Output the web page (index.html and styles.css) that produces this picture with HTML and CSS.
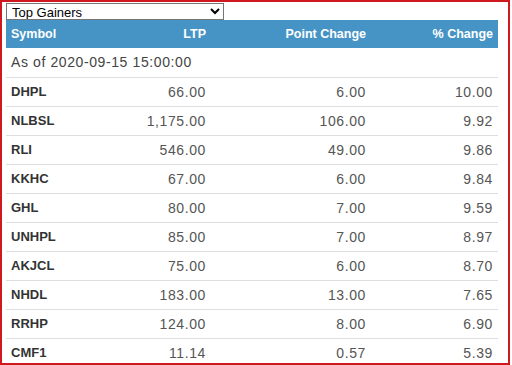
FILE: index.html
```html
<!DOCTYPE html>
<html>
<head>
<meta charset="utf-8">
<link rel="stylesheet" href="styles.css">
</head>
<body>
<div class="frame">
  <select class="picker">
    <option>Top Gainers</option>
    <option>Top Losers</option>
  </select>
  <table class="grid">
    <colgroup>
      <col class="c-sym"><col class="c-ltp"><col class="c-pt"><col class="c-pc">
    </colgroup>
    <thead>
      <tr><th class="left">Symbol</th><th>LTP</th><th>Point Change</th><th>% Change</th></tr>
    </thead>
    <tbody>
      <tr><td class="asof" colspan="4">As of 2020-09-15 15:00:00</td></tr>
      <tr><td class="sym">DHPL</td><td>66.00</td><td>6.00</td><td>10.00</td></tr>
      <tr><td class="sym">NLBSL</td><td>1,175.00</td><td>106.00</td><td>9.92</td></tr>
      <tr><td class="sym">RLI</td><td>546.00</td><td>49.00</td><td>9.86</td></tr>
      <tr><td class="sym">KKHC</td><td>67.00</td><td>6.00</td><td>9.84</td></tr>
      <tr><td class="sym">GHL</td><td>80.00</td><td>7.00</td><td>9.59</td></tr>
      <tr><td class="sym">UNHPL</td><td>85.00</td><td>7.00</td><td>8.97</td></tr>
      <tr><td class="sym">AKJCL</td><td>75.00</td><td>6.00</td><td>8.70</td></tr>
      <tr><td class="sym">NHDL</td><td>183.00</td><td>13.00</td><td>7.65</td></tr>
      <tr><td class="sym">RRHP</td><td>124.00</td><td>8.00</td><td>6.90</td></tr>
      <tr><td class="sym">CMF1</td><td>11.14</td><td>0.57</td><td>5.39</td></tr>
    </tbody>
  </table>
</div>
</body>
</html>
```
FILE: styles.css
```css
html, body {
  margin: 0;
  padding: 0;
  background: #fff;
}
body {
  font-family: "Liberation Sans", Arial, sans-serif;
  font-size: 13px;
  color: #333;
}
.frame {
  width: 510px;
  height: 365px;
  box-sizing: border-box;
  border: 2px solid #d0191f;
  overflow: hidden;
  padding: 1px 10px 0 4px;
}
.picker {
  display: block;
  width: 218px;
  height: 17px;
  margin: 0;
  padding: 0 0 0 1px;
  font-family: "Liberation Sans", Arial, sans-serif;
  font-size: 13px;
  color: #000;
  background: #fff;
  border: 1px solid #767676;
  border-radius: 0;
}
.grid {
  width: 492px;
  border-collapse: collapse;
  table-layout: fixed;
}
.c-sym { width: 100px; }
.c-ltp { width: 105px; }
.c-pt { width: 160px; }
.c-pc { width: 127px; }
.grid th {
  background: #4694c6;
  color: #fff;
  font-weight: bold;
  font-size: 12.5px;
  text-align: right;
  height: 28px;
  padding: 0 5px;
  box-sizing: border-box;
}
.grid th.left { text-align: left; }
.grid td {
  height: 29px;
  box-sizing: border-box;
  padding: 0 5px;
  text-align: right;
  border-top: 1px solid #ddd;
  color: #555;
  font-size: 14px;
  letter-spacing: 0.6px;
}
.grid tbody tr:first-child td { border-top: none; height: 29px; }
.grid td.asof {
  text-align: left;
  color: #444;
}
.grid td.sym {
  text-align: left;
  font-weight: bold;
  font-size: 13px;
  letter-spacing: 0;
  color: #333;
}
```
